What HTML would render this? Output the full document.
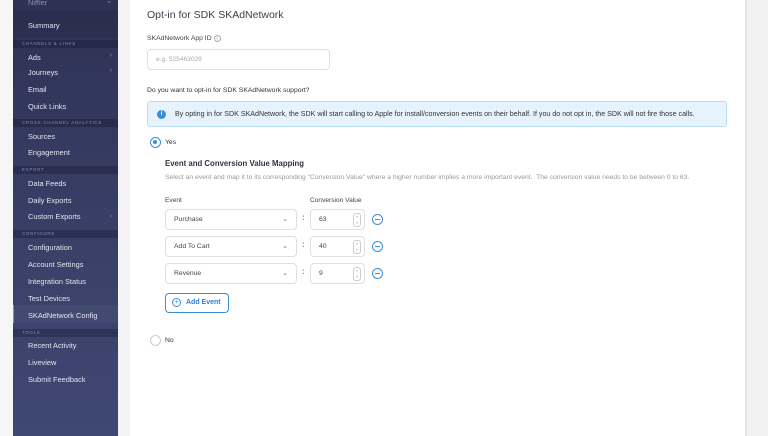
<!DOCTYPE html>
<html><head><style>
*{box-sizing:border-box;margin:0;padding:0}
body{width:768px;height:436px;overflow:hidden;background:#f6f6f7;font-family:"Liberation Sans",sans-serif;position:relative}
.sb{position:absolute;left:13px;top:0;width:105px;height:436px;background:linear-gradient(#2d3254,#3a4169 60%,#3f4773)}
.sb .it{position:absolute;left:15px;font-size:7.4px;color:#e3e5ee}
.sb .hd{position:absolute;left:0;width:105px;height:8px;background:rgba(20,24,50,.35);font-size:4.3px;letter-spacing:.8px;color:#8a90b0;padding-left:9px;line-height:8px}
.sb .ar{position:absolute;right:6px;font-size:7px;color:#8a90b0}
.gap{position:absolute;left:118px;top:0;width:12px;height:436px;background:#f3f3f5}
.main{position:absolute;left:130px;top:0;width:615px;height:436px;background:#fff}
.rs{position:absolute;left:745px;top:0;width:23px;height:436px;background:#f2f2f3;border-left:2px solid #e6e6e8}
.t{position:absolute;white-space:nowrap}
.inp{position:absolute;border:1px solid #dcdfe4;border-radius:4px;background:#fff}
.sel{font-size:6.8px;color:#444;padding-left:8px;line-height:20px}
.chev{position:absolute;right:8px;top:0;font-size:7px;color:#777}
.min{position:absolute;width:11px;height:11px;border:1px solid #3b8fd8;border-radius:50%}
.min:after{content:"";position:absolute;left:2px;top:4px;width:5px;height:1px;background:#3b8fd8}
.spin{position:absolute;right:3px;top:3px;width:8px;height:14px;border:1px solid #ccc;border-radius:3px;font-size:4px;color:#888;text-align:center;line-height:6px}
</style></head><body>
<div class="sb">
<div class="it" style="top:-2px;color:#8a90b0">Niffler</div><div class="ar" style="top:-3px">⌄</div>
<div style="position:absolute;top:10px;left:0;width:105px;height:28px;background:rgba(20,24,50,.15)"></div>
<div class="it" style="top:21px">Summary</div>
<div class="hd" style="top:40px">CHANNELS &amp; LINKS</div>
<div class="it" style="top:53px">Ads</div><div class="ar" style="top:52px">›</div>
<div class="it" style="top:68px">Journeys</div><div class="ar" style="top:67px">›</div>
<div class="it" style="top:85px">Email</div>
<div class="it" style="top:102px">Quick Links</div>
<div class="hd" style="top:119px">CROSS-CHANNEL ANALYTICS</div>
<div class="it" style="top:132px">Sources</div>
<div class="it" style="top:148px">Engagement</div>
<div class="hd" style="top:166px">EXPORT</div>
<div class="it" style="top:179px">Data Feeds</div>
<div class="it" style="top:196px">Daily Exports</div>
<div class="it" style="top:212px">Custom Exports</div><div class="ar" style="top:213px">›</div>
<div class="hd" style="top:230px">CONFIGURE</div>
<div class="it" style="top:243px">Configuration</div>
<div class="it" style="top:260px">Account Settings</div>
<div class="it" style="top:277px">Integration Status</div>
<div class="it" style="top:294px">Test Devices</div>
<div style="position:absolute;top:305px;left:0;width:105px;height:18px;background:rgba(255,255,255,.04);border-left:1px solid #4aa3f0"></div>
<div class="it" style="top:311px">SKAdNetwork Config</div>
<div class="hd" style="top:329px">TOOLS</div>
<div class="it" style="top:341px">Recent Activity</div>
<div class="it" style="top:358px">Liveview</div>
<div class="it" style="top:375px">Submit Feedback</div>
</div>
<div class="gap"></div>
<div class="rs"></div>
<div class="main">
<div class="t" style="left:17px;top:9px;font-size:10.5px;color:#3a3f4b">Opt-in for SDK SKAdNetwork</div>
<div class="t" style="left:17px;top:35px;font-size:6.8px;color:#444">SKAdNetwork App ID <span style="display:inline-block;width:7px;height:7px;border:1px solid #aaa;border-radius:50%;font-size:5px;text-align:center;line-height:6px;color:#999">i</span></div>
<div class="inp" style="left:17px;top:49px;width:183px;height:21px"><span class="t" style="left:8px;top:6px;font-size:6.6px;color:#aaa">e.g. 525463029</span></div>
<div class="t" style="left:17px;top:87px;font-size:6.8px;color:#333">Do you want to opt-in for SDK SKAdNetwork support?</div>
<div style="position:absolute;left:17px;top:101px;width:580px;height:26px;background:#e6f3fc;border:1px solid #b9dcf5;border-radius:3px"></div>
<div style="position:absolute;left:27px;top:110px;width:9px;height:9px;border-radius:50%;background:#3b8fd8;color:#fff;font-size:6px;text-align:center;line-height:9px;font-weight:bold">i</div>
<div class="t" style="left:45px;top:110px;font-size:7.1px;color:#333">By opting in for SDK SKAdNetwork, the SDK will start calling to Apple for install/conversion events on their behalf. If you do not opt in, the SDK will not fire those calls.</div>
<div style="position:absolute;left:20px;top:137px;width:11px;height:11px;border-radius:50%;border:1.5px solid #3b8fd8"><div style="position:absolute;left:2px;top:2px;width:4px;height:4px;border-radius:50%;background:#3b8fd8"></div></div>
<div class="t" style="left:35px;top:139px;font-size:6.8px;color:#333">Yes</div>
<div class="t" style="left:35px;top:159px;font-size:7.8px;color:#2e3340;font-weight:bold">Event and Conversion Value Mapping</div>
<div class="t" style="left:35px;top:174px;font-size:6.75px;color:#999">Select an event and map it to its corresponding "Conversion Value" where a higher number implies a more important event.&nbsp; The conversion value needs to be between 0 to 63.</div>
<div class="t" style="left:35px;top:197px;font-size:6.6px;color:#444">Event</div>
<div class="t" style="left:180px;top:197px;font-size:6.6px;color:#444">Conversion Value</div>

<div class="inp sel" style="left:35px;top:209px;width:132px;height:21px">Purchase<span class="chev">⌄</span></div>
<div class="t" style="left:172px;top:213px;font-size:8px;color:#3b8fd8;font-weight:bold">:</div>
<div class="inp sel" style="left:180px;top:209px;width:55px;height:21px">63<div class="spin">˄<br>˅</div></div>
<div class="min" style="left:242px;top:214px"></div>

<div class="inp sel" style="left:35px;top:236px;width:132px;height:21px">Add To Cart<span class="chev">⌄</span></div>
<div class="t" style="left:172px;top:240px;font-size:8px;color:#3b8fd8;font-weight:bold">:</div>
<div class="inp sel" style="left:180px;top:236px;width:55px;height:21px">40<div class="spin">˄<br>˅</div></div>
<div class="min" style="left:242px;top:241px"></div>

<div class="inp sel" style="left:35px;top:263px;width:132px;height:21px">Revenue<span class="chev">⌄</span></div>
<div class="t" style="left:172px;top:267px;font-size:8px;color:#3b8fd8;font-weight:bold">:</div>
<div class="inp sel" style="left:180px;top:263px;width:55px;height:21px">9<div class="spin">˄<br>˅</div></div>
<div class="min" style="left:242px;top:268px"></div>

<div style="position:absolute;left:35px;top:293px;width:64px;height:20px;border:1px solid #3b8fd8;border-radius:4px"></div>
<div style="position:absolute;left:42px;top:298px;width:9px;height:9px;border:1px solid #3b8fd8;border-radius:50%;font-size:7px;color:#3b8fd8;text-align:center;line-height:7px">+</div>
<div class="t" style="left:56px;top:299px;font-size:7px;color:#2f7fcf;font-weight:bold">Add Event</div>

<div style="position:absolute;left:20px;top:335px;width:11px;height:11px;border-radius:50%;border:1px solid #ccc"></div>
<div class="t" style="left:35px;top:337px;font-size:6.8px;color:#333">No</div>
</div>
</body></html>
